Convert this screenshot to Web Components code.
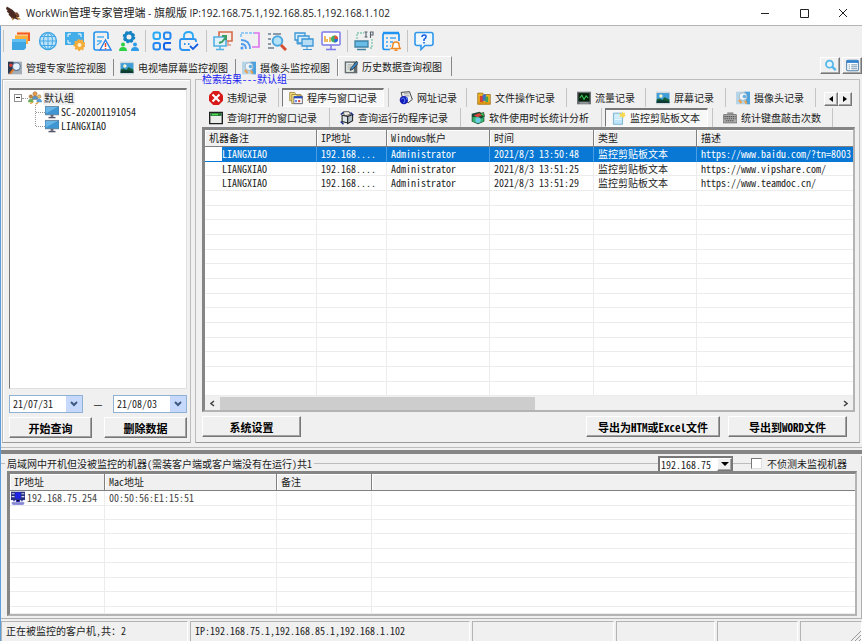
<!DOCTYPE html>
<html lang="zh-CN">
<head>
<meta charset="utf-8">
<title>WorkWin管理专家管理端</title>
<style>
  html, body { margin: 0; height: 100%; }
  body {
    background: #f0f0f0; color: #1c1c1c; overflow: hidden;
    font: 10px/14px "Noto Sans CJK SC", monospace;
    font-feature-settings: "hwid";
  }
</style>
</head>
<body>
<app-window></app-window>
<script>
const ICONS = {
  eagle: '<path d="M1 2l7 4 4 4 5 4-3 2 2 3-5-2-3 1-2-3-3-3 1-1-3-3 1-1-2-2z" fill="#4a2a20"/><path d="M10 10l4-1 3 4-3 1z" fill="#7d4a32"/><path d="M13 15l5 3M8 16l1 3" stroke="#c98b3c" stroke-width="1.5"/>',
  windows: '<path d="M6 1h13v9H6z" fill="#f15a22"/><path d="M4 4h13v9H4z" fill="#fbb03b"/><path d="M4 4h13M6 1h13" stroke="#ffe3b8"/><path d="M1 8h14v9l-2 2H1z" fill="#3fa6e4"/><path d="M1 8h14v3H1z" fill="#62c0f2"/>',
  globe: '<circle cx="10" cy="10" r="8.4" fill="#bfe3f8" stroke="#45a8e6" stroke-width="1.5"/><path d="M10 1.5v17M1.500 10h17M3 5.500h14M3 14.500h14" stroke="#45a8e6" fill="none"/><ellipse cx="10" cy="10" rx="4.500" ry="8.400" fill="none" stroke="#45a8e6"/>',
  screengear: '<path d="M0 1h19v13H0z" fill="#42ade8"/><path d="M3 6V3h3M13 3h3v3M3 9v3h3" stroke="#fff" fill="none"/><circle cx="14.500" cy="14" r="5" fill="#f5ad3a" stroke="#f5ad3a" stroke-dasharray="2 1.500" stroke-width="2"/><circle cx="14.500" cy="14" r="2" fill="#fff0d0"/>',
  docwarn: '<path d="M16 8V3q0-2-2-2H4Q2 1 2 3v14q0 2 2 2h4" fill="none" stroke="#2492ef" stroke-width="1.600"/><path d="M5 6h7M5 10h5M5 14l4-3" stroke="#49b0f6" stroke-width="1.300"/><path d="M13.500 9l5.500 10H8z" fill="#fff" stroke="#2a7fe6" stroke-width="1.400"/><path d="M13.500 12v4M13.500 17v1" stroke="#e84a30" stroke-width="1.500"/>',
  team: '<circle cx="10" cy="6" r="4" fill="none" stroke="#1683c4" stroke-width="3"/><circle cx="10" cy="6" r="5.500" fill="none" stroke="#1683c4" stroke-width="1.600" stroke-dasharray="2.300 2"/><circle cx="4" cy="13.500" r="2" fill="#2cd044"/><path d="M0 20q0-4 4-4t4 4z" fill="#2cd044"/><circle cx="16" cy="13.500" r="2" fill="#2c9be8"/><path d="M12 20q0-4 4-4t4 4z" fill="#2c9be8"/>',
  four: '<g fill="none" stroke-width="2"><rect x="1.500" y="1.500" width="6.500" height="6.500" rx="2" stroke="#27a8f4"/><rect x="12" y="1.500" width="6.500" height="6.500" rx="2" stroke="#2488f0"/><rect x="1.500" y="12" width="6.500" height="6.500" rx="2" stroke="#2488f0"/><path d="M19 12h-5q-2 0-2 2v2.500q0 2 2 2h5" stroke="#1464e8"/></g>',
  lock: '<path d="M17 11v-1q0-2-2-2H3Q1 8 1 10v6q0 3 3 3h7" fill="none" stroke="#2c94f2" stroke-width="1.800"/><path d="M5 8V5q0-4 4.500-4T14 5v3" fill="none" stroke="#2ba8f5" stroke-width="1.800"/><path d="M5 13h1.500M9 13h1.500" stroke="#2c94f2" stroke-width="2"/><path d="M11 15l3 3 5-5" fill="none" stroke="#155ee6" stroke-width="1.800"/>',
  screens: '<path d="M6 1h13v9H6z" fill="#f7ece6" stroke="#d56b4b" stroke-width="1.600"/><path d="M1 6h12v9H1z" fill="#dff2fc" stroke="#52b0e4" stroke-width="1.600"/><path d="M7 15v3M3 18.500h8" stroke="#52b0e4" stroke-width="1.500"/><path d="M6 12l3-1 4-5M9 5h4v4" stroke="#3a9d63" stroke-width="2" fill="none"/><path d="M15 11v2M14 14h4" stroke="#d56b4b"/>',
  cast: '<path d="M1 6V2h13" fill="none" stroke="#77bff2" stroke-width="1.500" stroke-dasharray="3 1"/><path d="M14 2h5v14h-7" fill="none" stroke="#dc72ee" stroke-width="1.600"/><path d="M1 9q9 0 9 9M1 13q5 0 5 5" fill="none" stroke="#529cf0" stroke-width="1.800"/><circle cx="2" cy="17" r="1.600" fill="#529cf0"/>',
  inspect: '<path d="M1 3h3M6 3h8M1 8h3M1 13h3M1 17h6" stroke="#8c9aa8" stroke-width="2"/><circle cx="10.500" cy="10" r="4.800" fill="#b6e2f8" stroke="#4ba8df" stroke-width="2"/><path d="M14 14l5 5" stroke="#d94e30" stroke-width="3"/>',
  monitors: '<g stroke="#3a95d6" stroke-width="1.300" fill="#dbeef9"><path d="M1 2h10v7H1z"/><path d="M4 5h11v7H4z"/><path d="M8 8h11v7H8z" fill="#b7ddf5"/></g><path d="M13 15v3M9 18.500h9M3 9v4h4" stroke="#3a95d6" fill="none"/>',
  chart: '<rect x="1" y="1" width="18" height="13" rx="1" fill="#fff" stroke="#7c7ae8" stroke-width="1.500"/><path d="M4 5v6M6 8v3M9 6v5" stroke="#e9a52c" stroke-width="1.500"/><circle cx="13.500" cy="8" r="3.500" fill="#42ae65"/><path d="M13.500 8V4.500A3.500 3.500 0 0117 8z" fill="#e5503b"/><path d="M13.500 8H17a3.500 3.500 0 01-3.500 3.500z" fill="#2b67de"/><path d="M10 14v4M5 18.500h10" stroke="#7c7ae8" stroke-width="1.500"/>',
  ip: '<path d="M3 8V2h7M18 8v9h-3" fill="none" stroke="#7fc6ae" stroke-width="1.300" stroke-dasharray="2 1"/><path d="M1 10h13v6H1z" fill="#68bde8" stroke="#3f82a3" stroke-width="1.300"/><path d="M3 18.500h9" stroke="#3f82a3" stroke-width="1.500"/><path d="M12 1v5M10.500 1h3M10.500 6h3M16.500 7V1H19v3h-2" fill="none" stroke="#54606c" stroke-width="1.100"/>',
  reportbell: '<path d="M9 18.500H4q-2 0-2-2V4q0-2 2-2h12q2 0 2 2v6" fill="none" stroke="#1f93f4" stroke-width="1.700"/><path d="M2 2h16" stroke="#1f93f4" stroke-width="2.500"/><path d="M5 7h2M9 7h6M5 11h2M9 11h3M5 15h2M9 15h1" stroke="#3ba7f7" stroke-width="1.500"/><path d="M10.500 17.500q1.500-1 1.500-4 0-2.500 3-2.500t3 2.500q0 3 1.500 4zM13.500 19.300h3" fill="#fff" stroke="#f08a24" stroke-width="1.500"/>',
  help: '<path d="M3 1.500h14q2 0 2 2v9q0 2-2 2h-6l-4 4v-4H3q-2 0-2-2v-9q0-2 2-2z" fill="#eef8ff" stroke="#3098ec" stroke-width="1.600"/><path d="M8 6q0-2 2.200-2T12 6q0 1.200-2 2.400V10M10 11v1.500" fill="none" stroke="#1259df" stroke-width="1.500"/>',
  magview: '<path d="M0 1h20v18H0z" fill="#a5adb6"/><path d="M0 1h8v9l-4 8H0z" fill="#2d3950"/><circle cx="12" cy="8" r="5.500" fill="#e6f3ff" stroke="#526f96" stroke-width="1.500"/><path d="M8 12l-5 6" stroke="#e07b28" stroke-width="3"/><circle cx="4" cy="6" r="2.500" fill="#d7443d"/>',
  photo: '<path d="M0 1h20v18H0z" fill="#cdd6da"/><path d="M1 3h18v14H1z" fill="#3f9dd8"/><circle cx="7" cy="7" r="2.500" fill="#f4f7ce"/><path d="M1 12q5-3 8 1l3-4 7 3v5H1z" fill="#17603a"/><path d="M1 14q8-2 18 1v2H1z" fill="#0d3a34"/>',
  camera: '<path d="M0 1h20v18H0z" fill="#b7d5e8"/><path d="M12 1h8v18h-5z" fill="#4ca2dc"/><circle cx="10" cy="8" r="5.500" fill="#eef5fa" stroke="#a4b9ca" stroke-width="1.500"/><circle cx="12" cy="8" r="2.500" fill="#65aee0"/><path d="M4 13l4 4M13 14l2 4" stroke="#e9a04c" stroke-width="3"/>',
  note: '<path d="M1 2h18v17H1z" fill="#656c70"/><path d="M3 4h11v13H3z" fill="#e5eae4"/><path d="M5 7h7M5 10h5M5 13h7" stroke="#7f888c"/><path d="M18 2l-8 9-1 4 4-2 7-8z" fill="#3b88c5" stroke="#222"/>',
  magnify: '<circle cx="8.500" cy="8" r="5.500" fill="#e2f6ff" stroke="#53b6e8" stroke-width="2.600"/><path d="M13 12l5 5" stroke="#53b6e8" stroke-width="3.600"/>',
  form: '<rect x="1" y="2" width="18" height="16" rx="2" fill="#fff" stroke="#4c7faa" stroke-width="1.600"/><path d="M1 4h18" stroke="#2f83d0" stroke-width="4"/><path d="M4 9h2M8 9h9M4 12h2M8 12h9M4 15h2M8 15h9" stroke="#6f92ae" stroke-width="1.500"/>',
  stop: '<path d="M6 0h8l6 6v8l-6 6H6l-6-6V6z" fill="#d91818"/><path d="M5 5l10 10M15 5L5 15" stroke="#fff" stroke-width="3"/>',
  folderwin: '<path d="M1 2h7l2 3h7v9H1z" fill="#f4dc7a" stroke="#8c732d"/><path d="M4 5h7l1 2h7v11H4z" fill="#f7e58f" stroke="#8c732d"/><path d="M7 8h12v10H7z" fill="#fff" stroke="#404a70"/><path d="M7 9h12" stroke="#284cc0" stroke-width="3"/><path d="M9 13h2v3H9z" fill="#2a58d0"/><path d="M13 13h3v3h-3z" fill="#d34a3d"/>',
  web: '<path d="M3 2l12-1 4 11-6 5-8-7z" fill="#eef0f0" stroke="#333" stroke-width="1.300"/><path d="M7 4h7M8 7h7" stroke="#777"/><circle cx="7" cy="13" r="6" fill="#171bb5"/><path d="M3 12q4-4 5 0t-2 5M10 9l2 4" stroke="#4d7bf2" stroke-width="1.500" fill="none"/>',
  files: '<path d="M1 3h7l2 2h9v14H1z" fill="#efb51e" stroke="#8d671c"/><path d="M4 7h5v9H4z" fill="#d8402e"/><path d="M8 5h5v9H8z" fill="#3c70c9"/><path d="M12 8h4v8h-4z" fill="#43a355"/><path d="M1 16h18v3H1z" fill="#d89214"/>',
  traffic: '<path d="M0 1h20v18H0z" fill="#6d7376"/><path d="M2 3h16v12H2z" fill="#06200e"/><path d="M4 10l3-4 3 6 3-5 3 3" fill="none" stroke="#37c955" stroke-width="1.500"/><path d="M4 17h12" stroke="#c9ced0"/>',
  winopen: '<path d="M1 2h18v16H1z" fill="#e9eeea" stroke="#202020" stroke-width="2"/><path d="M2 5h16" stroke="#1d6c2a" stroke-width="4"/><path d="M4 5h9" stroke="#47df50" stroke-width="2"/>',
  running: '<path d="M5 1h8l2 4-9 2z" fill="#f0f0e8" stroke="#222"/><path d="M3 6l8 2v9l-8-2z" fill="#dde5e8" stroke="#222" stroke-width="1.500"/><path d="M11 8l7-3v9l-7 4z" fill="#aebfca" stroke="#222" stroke-width="1.500"/><path d="M1 5l4-3M15 2l4 4M1 15l4 4" stroke="#142780" stroke-width="2"/>',
  usage: '<path d="M1 4l11-3 7 4v10l-9 4-9-4z" fill="#1b4b38"/><path d="M4 6l8-3 4 3-7 3z" fill="#d74538"/><path d="M2 9q6-2 9 1t7-2v7l-8 3-8-3z" fill="#37b36a"/><circle cx="10" cy="13" r="4" fill="#6acbe2"/><path d="M13 4l5-2 1 6" fill="#45d458" stroke="#192b22"/>',
  clip: '<path d="M2 3h13v16H2z" fill="#bfe5f8" stroke="#5b9fc5"/><path d="M4 6h7M4 9h9M4 12h9" stroke="#e8f8ff" stroke-width="1.500"/><path d="M15 0l1 3 3-1-1 3 2 2-3 1-1 3-2-3-4 1 2-3-2-3 4 1z" fill="#f8d94e"/>',
  keyboard: '<path d="M1 5h18l1 12H0z" fill="#aaa" stroke="#666"/><path d="M2 8h16M2 11h16M4 14h12" stroke="#505050" stroke-width="1.500" stroke-dasharray="2 1"/><path d="M6 3h8v2" stroke="#777" stroke-width="1.500" fill="none"/>',
  users: '<g stroke="#71502a" stroke-width=".6"><circle cx="10" cy="4" r="3" fill="#e99b47"/><path d="M6 12q0-5 4-5t4 5z" fill="#5399d0"/><circle cx="4" cy="8" r="2.500" fill="#c9893d"/><circle cx="16" cy="8" r="2.500" fill="#f1c26c"/></g><path d="M0 16q0-5 4-5t4 5z" fill="#6daf5e"/><path d="M12 16q0-5 4-5t4 5z" fill="#5a9fd6"/><path d="M3 18l4-2M11 19l4-3" stroke="#dda03a" stroke-width="2"/>',
  pc: '<path d="M0 2h20v12H0z" fill="#3f96d2" stroke="#547087"/><path d="M1 3h17L1 12z" fill="#69b5e6"/><path d="M8 14h4v3H8z" fill="#667"/><path d="M5 18h10" stroke="#556" stroke-width="2"/>',
  netpc: '<path d="M0 1h20v12H0z" fill="#29317e"/><path d="M1 4h4M1 8h4M15 4h4M15 8h4" stroke="#d9dcf5" stroke-width="1.500"/><path d="M6 2h8v9H6z" fill="#2024e6"/><path d="M8 12h4v3H8zM1 17h18M3 14h3M14 14h3" stroke="#2b2ca8" stroke-width="1.500"/><path d="M2 19h16" stroke="#3a38d0"/>'
};

const define = (name, css, html) => customElements.define(name, class extends HTMLElement {
  constructor() {
    super();
    const t = document.createElement('template');
    t.innerHTML = `<style>:host{box-sizing:border-box}*{box-sizing:border-box}${css}</style>${typeof html === 'function' ? html(this) : html}`;
    this.attachShadow({ mode: 'open' }).append(t.content.cloneNode(true));
  }
});
const raised = 'border:1px solid;border-color:#fff #777 #777 #fff;box-shadow:inset -1px -1px #a8a8a8;background:#f0f0f0;';
const inherit = 'font:inherit;font-feature-settings:inherit;color:inherit;';

define('ui-icon', ':host{display:block;flex:none;width:var(--icon,14px);height:var(--icon,14px)}svg{display:block;width:100%;height:100%}',
  el => `<svg viewBox="0 0 20 20" aria-hidden="true">${ICONS[el.getAttribute('name')]}</svg>`);

define('title-bar', `
  :host{display:flex;align-items:center;flex:none;height:26px;padding-left:6px;background:#fff;border-bottom:1px solid #b4b4b4;font-family:"Open Sans","Noto Sans CJK SC",sans-serif}
  h1{flex:1;margin:0 0 0 4px;font-size:10px;font-weight:400;white-space:nowrap;color:#222}
  ::slotted(span){font-size:11px}
  button{width:39px;height:24px;border:0;background:none;padding:0;display:grid;place-items:center}
  svg{width:10px;height:10px;fill:none;stroke:#222}`,
  `<ui-icon name="eagle" style="--icon:16px"></ui-icon><h1><slot></slot></h1>
  <button aria-label="最小化"><svg viewBox="0 0 10 10"><path d="M1 5.500h8"/></svg></button>
  <button aria-label="最大化"><svg viewBox="0 0 10 10"><path d="M1.500 1.500h8v8h-8z"/></svg></button>
  <button aria-label="关闭"><svg viewBox="0 0 10 10"><path d="M1 1l8 8M9 1L1 9"/></svg></button>`);

const tool = (n, label) => `<button aria-label="${label}"><ui-icon name="${n}"></ui-icon></button>`;
define('tool-bar', `
  :host{display:flex;align-items:center;flex:none;height:29px;padding-left:2px;--icon:20px}
  div{display:flex;border-left:1px solid #c4c4c4;height:22px;padding:0 3px}
  div+div{padding:0 4px 0 2px}
  div.wide{padding-left:2px;padding-right:3px}
  button{width:27px;height:22px;border:0;background:none;padding:0;display:grid;place-items:center}`,
  `<div>${tool('windows','窗口')}${tool('globe','网络')}${tool('screengear','屏幕设置')}${tool('docwarn','违规')}${tool('team','分组')}</div>
  <div>${tool('four','应用')}${tool('lock','锁定')}</div>
  <div class="wide">${tool('screens','屏幕')}${tool('cast','广播')}${tool('inspect','检查')}${tool('monitors','多屏')}${tool('chart','图表')}</div>
  <div class="wide">${tool('ip','IP')}${tool('reportbell','报告')}</div>
  <div class="wide">${tool('help','帮助')}</div>`);

define('view-tab', `
  :host{display:block;height:17px}
  button{display:flex;align-items:center;gap:4px;width:100%;height:17px;padding:0 0 0 6px;border:0;border-right:1px solid #888;background:none;${inherit}white-space:nowrap}
  :host([current]) button{height:20px;padding-left:5px;border-top:1px solid #fff;border-left:1px solid #fff}
  :host([current]){height:20px;align-self:start}`,
  el => `<button role="tab"><ui-icon name="${el.getAttribute('icon')}"></ui-icon><span><slot></slot></span></button>`);

define('view-bar', `
  :host{display:flex;align-items:start;flex:none;height:22px;padding:1px 0 0 1px}
  nav{display:grid;grid-template-columns:112px 122px 102px 114px;align-items:end;flex:1}
  .small{width:20px;height:17px;margin-top:1px;padding:0;display:grid;place-items:center;--icon:13px;${raised}}
  .small+.small{margin-left:2px}`,
  `<nav role="tablist"><view-tab icon="magview">管理专家监控视图</view-tab><view-tab icon="photo">电视墙屏幕监控视图</view-tab><view-tab icon="camera">摄像头监控视图</view-tab><view-tab icon="note" current>历史数据查询视图</view-tab></nav>
  <button class="small" aria-label="搜索"><ui-icon name="magnify"></ui-icon></button><button class="small" aria-label="列表"><ui-icon name="form"></ui-icon></button>`);

define('push-button', `
  :host{display:block}
  button{width:100%;height:21px;padding:0;${inherit}font-size:11px;font-weight:700;line-height:16px;color:#000;white-space:nowrap;border:1px solid;border-color:#fff #777 #777 #fff;box-shadow:inset -1px -1px #a0a0a0;background:#f0f0f0}`,
  `<button><slot></slot></button>`);

define('date-box', `
  :host{display:flex;height:18px;border:1px solid #8fb2d4;background:#fff}
  input{flex:1;width:0;min-width:0;border:0;padding:0 0 1px 3px;${inherit}background:none}
  button{width:16px;height:16px;border:0;padding:0;background:#c6d8fb;display:grid;place-items:center}
  svg{width:8px;height:6px;fill:none;stroke:#405a80;stroke-width:2}`,
  el => `<input aria-label="${el.getAttribute('label')}" value="${el.getAttribute('value')}"><button aria-label="选择日期"><svg viewBox="0 0 8 6"><path d="M1 1l3 3 3-3"/></svg></button>`);

define('group-tree', `
  :host{display:block;flex:1;min-height:0;background:#fff;border:1px solid;border-color:#777 #e0e0e0 #e0e0e0 #777;border-top-width:2px;padding:1px 4px}
  ul{list-style:none;margin:0;padding:0}
  li div{display:flex;align-items:center;height:14px}
  .box{width:8px;height:8px;border:1px solid #909090;position:relative}
  .box::after{content:"";position:absolute;left:1px;right:1px;top:2px;border-top:1px solid #333}
  i{width:6px;border-top:1px dotted #999}
  b{font-weight:400;background:#f0f0f0;margin-left:1px;padding:0 1px}
  ul ul{margin-left:21px;border-left:1px dotted #999;height:21px}
  ul ul i{width:9px}
  ul ul span{margin-left:2px}`,
  `<ul role="tree"><li role="treeitem"><div><span class="box"></span><i></i><ui-icon name="users"></ui-icon><b>默认组</b></div>
  <ul role="group"><li role="treeitem"><div><i></i><ui-icon name="pc"></ui-icon><span>SC-202001191054</span></div></li><li role="treeitem"><div><i></i><ui-icon name="pc"></ui-icon><span>LIANGXIAO</span></div></li></ul></li></ul>`);

define('query-panel', `
  :host{display:flex;flex-direction:column;min-height:0;border:1px solid #bcbcbc;border-bottom-color:#999;box-shadow:inset 1px 1px #fff;padding:8px 3px 4px 6px}
  .dates{display:grid;grid-template-columns:74px 1fr 74px;align-items:center;text-align:center;margin-top:6px}
  .acts{display:grid;grid-template-columns:83px 83px;justify-content:space-between;margin-top:4px}`,
  `<group-tree></group-tree>
  <div class="dates"><date-box label="开始日期" value="21/07/31"></date-box><span>—</span><date-box label="结束日期" value="21/08/03"></date-box></div>
  <div class="acts"><push-button>开始查询</push-button><push-button>删除数据</push-button></div>`);

define('record-tab', `
  :host{display:block;height:19px;border-right:1px solid #c4c4c4;padding:0 4px 0 3px}
  button{display:flex;align-items:center;gap:4px;width:100%;height:19px;padding:0 0 0 6px;border:1px solid transparent;background:none;${inherit}white-space:nowrap}
  :host([current]) button{background:#f8f8f8;border-color:#777 #fff #fff #777;border-top-width:2px}`,
  el => `<button role="tab"><ui-icon name="${el.getAttribute('icon')}"></ui-icon><span><slot></slot></span></button>`);

define('record-tabs', `
  :host{display:grid;grid-template-columns:1fr auto;flex:none;column-gap:8px;padding-top:1px}
  nav{display:grid;min-width:0;height:20px;align-items:end}
  record-tab:first-child{padding-left:0}
  .one{grid-template-columns:77px 110px 78px 100px 79px 80px 90px}
  .two{grid-template-columns:128px 131px 141px 111px 120px;grid-column:1/-1}
  .step{display:flex;align-items:center;padding:4px 3px 0 0}
  .step button{width:14px;height:14px;padding:0;display:grid;place-items:center;${raised}}
  svg{width:4px;height:6px}`,
  `<nav class="one" role="tablist"><record-tab icon="stop">违规记录</record-tab><record-tab icon="folderwin" current>程序与窗口记录</record-tab><record-tab icon="web">网址记录</record-tab><record-tab icon="files">文件操作记录</record-tab><record-tab icon="traffic">流量记录</record-tab><record-tab icon="photo">屏幕记录</record-tab><record-tab icon="camera">摄像头记录</record-tab></nav>
  <div class="step"><button aria-label="向左"><svg viewBox="0 0 4 6"><path d="M4 0v6L0 3z"/></svg></button><button aria-label="向右"><svg viewBox="0 0 4 6"><path d="M0 0v6l4-3z"/></svg></button></div>
  <nav class="two" role="tablist"><record-tab icon="winopen">查询打开的窗口记录</record-tab><record-tab icon="running">查询运行的程序记录</record-tab><record-tab icon="usage">软件使用时长统计分析</record-tab><record-tab icon="clip" current>监控剪贴板文本</record-tab><record-tab icon="keyboard">统计键盘敲击次数</record-tab></nav>`);

const rows = (data, total, cols) => Array.from({ length: total }, (_, r) => {
  const d = data[r] || [];
  return `<tr${d.selected ? ' class="sel"' : ''}>${Array.from({ length: cols }, (_, c) => `<td>${d[c] || ''}</td>`).join('')}</tr>`;
}).join('');
const listCss = `
  :host{display:flex;flex-direction:column;min-height:0;overflow:hidden;background:#fff;border:3px solid #858585;border-width:3px 2px 2px 3px;border-right-color:#b4b4b4;border-bottom-color:#b4b4b4}
  table,tbody{display:flex;flex-direction:column;flex:1;min-height:0;min-width:0}
  tr{display:grid;grid-template-columns:var(--cols);flex:1;min-height:0}
  thead tr{background:#f0f0f0;border-bottom:1px solid #808080;height:17px}
  th{font-weight:400;text-align:left;padding:1px 4px 0;border-right:1px solid #808080;box-shadow:inset 1px 1px #fff;white-space:nowrap;line-height:14px;overflow:hidden}
  th:last-child{border-right:0}
  td{padding:0 4px;border-right:1px solid #ececec;border-bottom:1px solid #ececec;line-height:14px;white-space:nowrap;overflow:hidden;min-width:0}
  td:last-child{border-right:0}`;

const log = t => ['LIANGXIAO', '192.168....', 'Administrator', '2021/8/3 ' + t, '监控剪贴板文本'];
const logs = [[...log('13:50:48'), 'https://www.baidu.com/?tn=8003'], [...log('13:51:25'), 'https://www.vipshare.com/'], [...log('13:51:29'), 'https://www.teamdoc.cn/']];
logs[0].selected = true;

define('record-list', listCss + `
  :host{flex:1;--cols:112px 70px 103px 104px 103px minmax(0,1fr)}
  td:nth-child(1){padding-left:17px} td:last-child{padding-right:0}
  .sel td{background:#0878d4;color:#fff;border-right-color:#4a9fe4;border-bottom-color:#0878d4}
  .sel td:first-child{background:linear-gradient(90deg,#fff 17px,#0878d4 17px)}
  .bar{display:flex;align-items:center;flex:none;height:14px;background:#f0f0f0}
  .bar button{width:15px;height:14px;border:0;padding:0;background:none;display:grid;place-items:center}
  .track{flex:1;height:13px}.thumb{width:51%;height:100%;background:#cdcdcd}
  svg{width:5px;height:7px;fill:none;stroke:#444;stroke-width:1.500}`,
  `<table><thead><tr><th>机器备注</th><th>IP地址</th><th>Windows帐户</th><th>时间</th><th>类型</th><th>描述</th></tr></thead><tbody>${rows(logs, 17, 6)}</tbody></table>
  <div class="bar"><button aria-label="向左滚动"><svg viewBox="0 0 5 7"><path d="M4 1L1 3.500 4 6"/></svg></button><div class="track"><div class="thumb"></div></div><button aria-label="向右滚动"><svg viewBox="0 0 5 7"><path d="M1 1l3 2.500L1 6"/></svg></button></div>`);

define('result-panel', `
  :host{display:flex;min-width:0;min-height:0}
  fieldset{flex:1;display:flex;flex-direction:column;min-width:0;margin:-7px 0 0;border:1px solid #bcbcbc;border-bottom-color:#999;padding:0 4px 5px 6px}
  legend{color:#1a1af0;padding:0;margin:0;height:14px;line-height:14px}
  .acts{display:grid;grid-template-columns:99px 1fr 134px 119px;column-gap:8px;margin:4px 8px 0 0}
  .acts :nth-child(2){grid-column:3}`,
  `<fieldset><legend>检索结果---默认组</legend><record-tabs></record-tabs><record-list></record-list>
  <div class="acts"><push-button>系统设置</push-button><push-button>导出为HTM或Excel文件</push-button><push-button>导出到WORD文件</push-button></div></fieldset>`);

define('machine-list', listCss + `
  :host{flex:1;--cols:95px 172px 95px minmax(0,1fr);margin:0 4px 0 6px}
  td:first-child{display:flex;align-items:center;gap:2px;padding:0 1px}
  tbody tr:last-child{flex-grow:.5}
  td{color:#444}`,
  `<table><thead><tr><th>IP地址</th><th>Mac地址</th><th>备注</th><th></th></tr></thead><tbody>${rows([['<ui-icon name="netpc"></ui-icon>192.168.75.254', '00:50:56:E1:15:51']], 9, 4)}</tbody></table>`);

define('machine-panel', `
  :host{display:flex;flex-direction:column;min-height:0;border-right:1px solid #b0b0b0;border-bottom:1px solid #b0b0b0;padding-bottom:2px;margin-top:2px}
  header{display:flex;align-items:center;height:15px;flex:none;white-space:nowrap}
  hr{margin:0;border:0;border-top:1px solid #bcbcbc;width:4px}
  .grow{flex:1}.mid{width:18px}
  h2{font-size:10px;font-weight:400;margin:0;padding:0 2px}
  .combo{display:grid;grid-template-columns:1fr 15px;align-items:center;width:75px;height:16px;background:#fff;border:1px solid #777;border-width:2px 1px 1px 2px}
  select{grid-area:1/1/2/3;width:100%;height:13px;border:0;padding:0 0 0 1px;margin:0;background:none;${inherit}line-height:13px;appearance:none;outline:0}
  .combo i{grid-area:1/2;height:13px;display:grid;place-items:center;pointer-events:none;${raised}}
  svg{width:8px;height:4px}
  label{display:flex;align-items:center;gap:5px;padding-right:14px}
  input{appearance:none;width:11px;height:11px;margin:0;background:#fff;border:1px solid;border-color:#777 #ddd #ddd #777}`,
  `<header><hr><h2>局域网中开机但没被监控的机器(需装客户端或客户端没有在运行)共1</h2><hr class="grow">
  <div class="combo"><select aria-label="网段"><option>192.168.75</option></select><i><svg viewBox="0 0 8 4"><path d="M0 0h8L4 4z"/></svg></i></div>
  <hr class="mid"><label><input type="checkbox">不侦测未监视机器</label></header><machine-list></machine-list>`);

define('status-bar', `
  :host{display:grid;grid-template-columns:187px 280px 142px 99px 81px minmax(0,1fr);gap:2px;flex:none;height:20px}
  div{border-top:1px solid #b4b4b4;border-left:1px solid #b4b4b4;border-right:1px solid #fff;padding:2px 0 0 4px;white-space:nowrap;overflow:hidden}
  .grip{display:flex;justify-content:end;align-items:end;padding:0}
  svg{width:10px;height:10px;stroke:#999;fill:none}`,
  `<div>正在被监控的客户机，共：2</div><div>IP:192.168.75.1,192.168.85.1,192.168.1.102</div><div></div><div></div><div></div><div class="grip"><svg viewBox="0 0 10 10"><path d="M0 10L10 0M4 10l6-6M8 10l2-2"/></svg></div>`);

define('app-window', `
  :host{display:flex;flex-direction:column;height:100vh;background:#f0f0f0}
  main{flex:1;min-height:0;display:flex;flex-direction:column;border-left:1px solid #5a9edb}
  .split{flex:1;min-height:0;display:grid;grid-template-rows:minmax(0,364fr) 11px minmax(0,164fr)}
  .top{display:grid;grid-template-columns:189px minmax(0,1fr);gap:4px;padding:2px 2px 0 1px;min-height:0}
  .sash{margin-top:4px;border-top:1px solid #bcbcbc;border-bottom:4px solid #858585}
  status-bar{margin-top:2px}`,
  `<title-bar>WorkWin<span>管理专家管理端</span> - <span>旗舰版</span> IP:192.168.75.1,192.168.85.1,192.168.1.102</title-bar>
  <main><tool-bar></tool-bar><view-bar></view-bar>
  <div class="split"><div class="top"><query-panel></query-panel><result-panel></result-panel></div><div class="sash"></div><machine-panel></machine-panel></div>
  <status-bar></status-bar></main>`);
</script>
</body>
</html>
